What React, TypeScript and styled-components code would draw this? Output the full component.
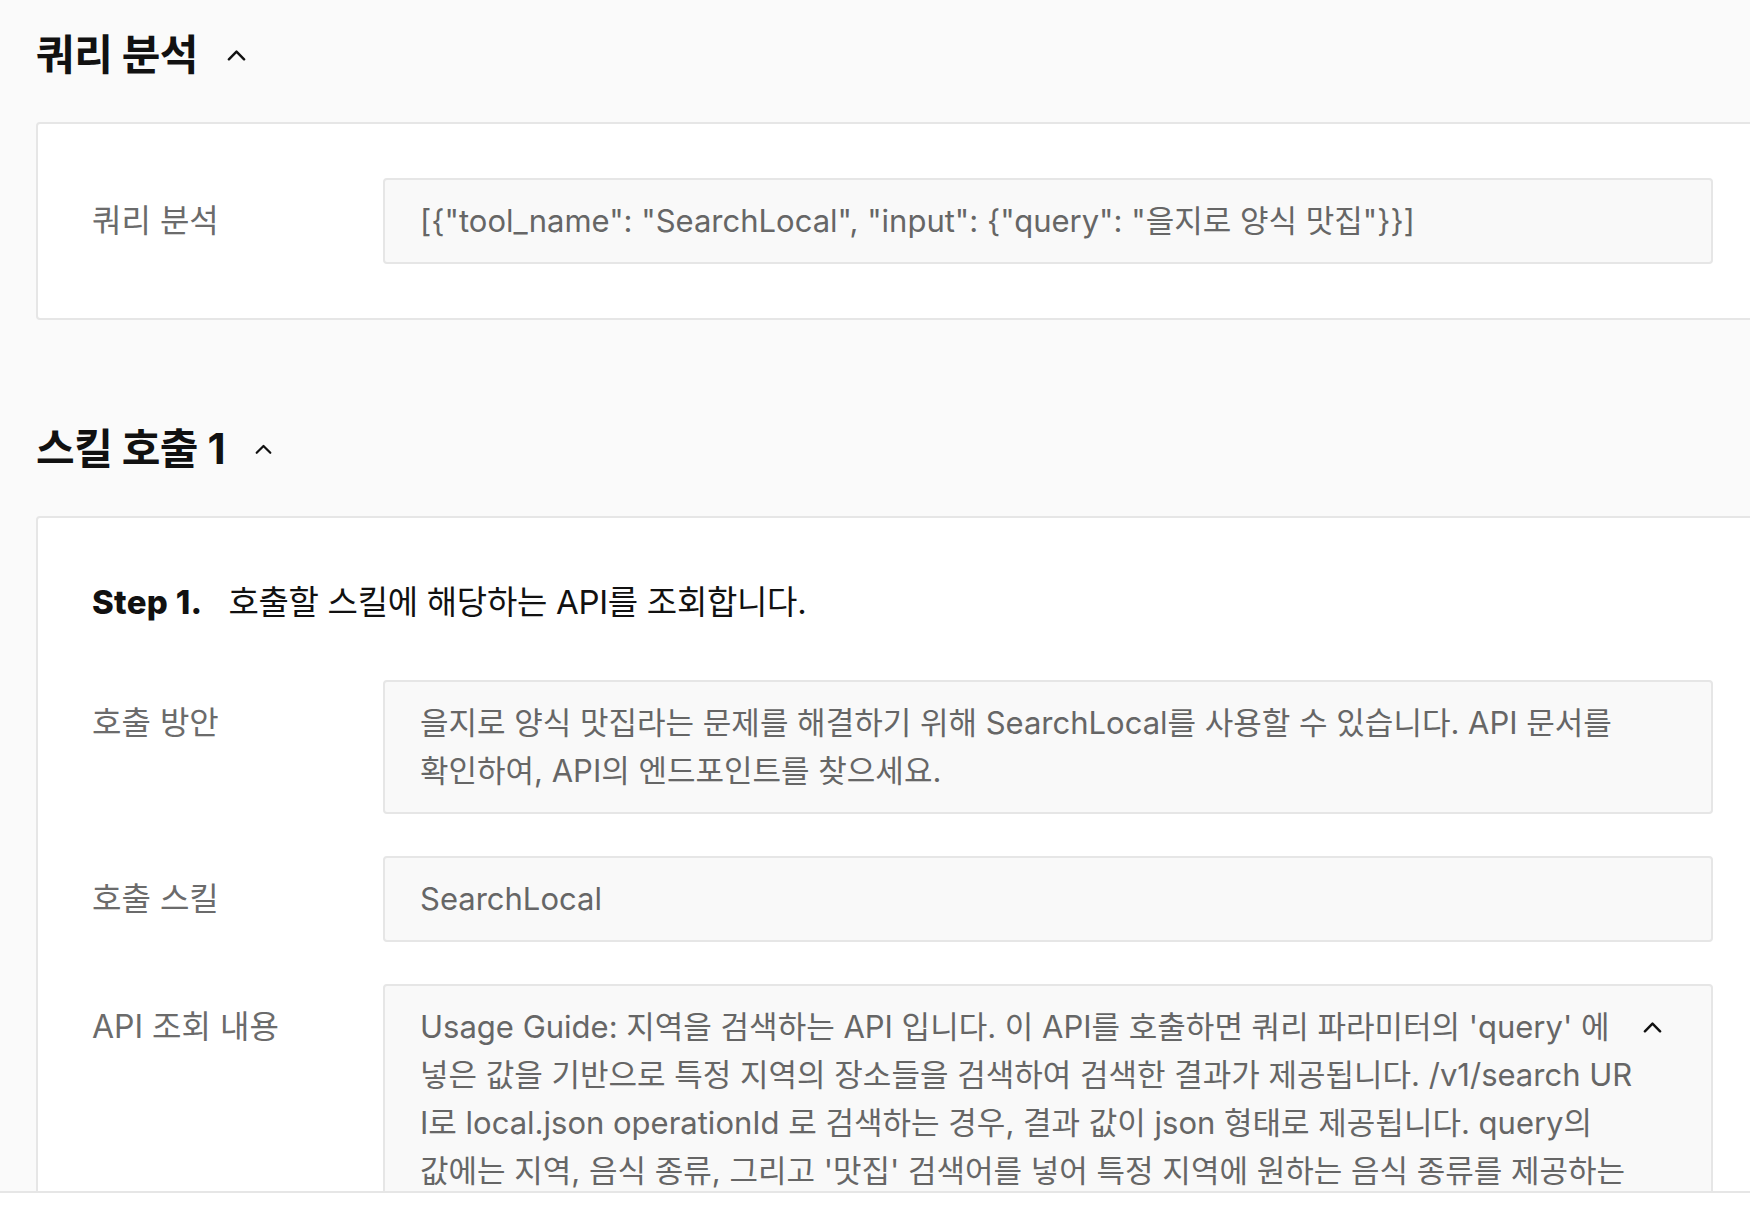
import React from "react";
import styled, { createGlobalStyle } from "styled-components";

const GlobalStyle = createGlobalStyle`
    html, body {
        margin: 0;
        padding: 0;
        background: #fafafa;
        overflow: hidden;
    }
    body {
        font-family: Inter, "Noto Sans CJK KR", sans-serif;
        color: #111;
    }
    * {
        box-sizing: border-box;
    }
`;

const Page = styled.div`
    display: flex;
    flex-direction: column;
    height: 100vh;
`;

const Main = styled.main`
    flex: 1;
    overflow: hidden;
    padding: 29px 0 0 36px;
`;

const Footer = styled.footer`
    height: 23px;
    flex-shrink: 0;
    background: #fff;
    border-top: 2px solid #e6e6e6;
`;

const Section = styled.section`
    & + & {
        margin-top: 103px;
    }
`;

const SectionHeader = styled.div`
    display: flex;
    align-items: center;
    gap: 28px;
    margin-bottom: 41px;
`;

const SectionTitle = styled.h2`
    margin: 0;
    font-size: 42px;
    line-height: 52px;
    font-weight: 700;
    color: #111;
    letter-spacing: -0.5px;
`;

const Card = styled.div`
    width: 1733px;
    background: #fff;
    border: 2px solid #e6e6e6;
    border-radius: 4px;
    padding: 54px;
`;

const Step = styled.div`
    margin: 6px 0 54px;
    font-size: 33px;
    line-height: 48px;
    color: #111;
    letter-spacing: -0.3px;
`;

const StepLabel = styled.b`
    font-weight: 800;
    letter-spacing: 0.3px;
    margin-right: 26px;
`;

const FieldRow = styled.div`
    display: grid;
    grid-template-columns: 291px minmax(0, 1fr);
    align-items: start;

    & + & {
        margin-top: 42px;
    }
`;

const Label = styled.div`
    padding-top: 19px;
    font-size: 32px;
    line-height: 48px;
    color: #6b6b6b;
`;

const ValueBox = styled.div<{ $collapsible?: boolean }>`
    display: flex;
    align-items: flex-start;
    gap: 16px;
    min-width: 0;
    background: #f9f9f9;
    border: 2px solid #e6e6e6;
    border-radius: 4px;
    padding: ${(p) => (p.$collapsible ? "17px 47px 17px 35px" : "17px 35px")};
    font-size: 31px;
    line-height: 48px;
    color: #666;
`;

const ValueText = styled.div`
    flex: 1;
    min-width: 0;
    word-break: keep-all;
`;

const ValueLine = styled.span`
    display: block;
    white-space: nowrap;
`;

const ToggleButton = styled.button`
    display: flex;
    align-items: center;
    justify-content: center;
    flex-shrink: 0;
    width: 24px;
    height: 48px;
    padding: 0;
    border: none;
    background: none;
    color: #111;
    cursor: pointer;
`;

const HeaderToggle = styled(ToggleButton)`
    width: 20px;
    height: 20px;
`;

const CaretSvg = styled.svg`
    display: block;
    flex-shrink: 0;
`;

const Caret = ({ width = 19 }: { width?: number }) => (
    <CaretSvg width={width} height={12} viewBox="0 0 20 12" fill="none">
        <path
            d="M2 10.5 L10 2.5 L18 10.5"
            stroke="currentColor"
            strokeWidth={2.6}
            strokeLinecap="round"
            strokeLinejoin="round"
        />
    </CaretSvg>
);

// API 조회 결과 (뷰어에 표시되는 줄 단위 그대로)
const apiUsageLines = [
    "Usage Guide: 지역을 검색하는 API 입니다. 이 API를 호출하면 쿼리 파라미터의 'query' 에",
    "넣은 값을 기반으로 특정 지역의 장소들을 검색하여 검색한 결과가 제공됩니다. /v1/search UR",
    "I로 local.json operationId 로 검색하는 경우, 결과 값이 json 형태로 제공됩니다. query의",
    "값에는 지역, 음식 종류, 그리고 '맛집' 검색어를 넣어 특정 지역에 원하는 음식 종류를 제공하는",
    "장소들을 검색할 수 있습니다. 검색 결과는 장소명, 주소, 카테고리 정보를 포함합니다.",
];

const App = () => {
    return (
        <Page>
            <GlobalStyle />
            <Main>
                <Section>
                    <SectionHeader>
                        <SectionTitle>쿼리 분석</SectionTitle>
                        <HeaderToggle aria-label="접기">
                            <Caret />
                        </HeaderToggle>
                    </SectionHeader>
                    <Card>
                        <FieldRow>
                            <Label>쿼리 분석</Label>
                            <ValueBox>
                                <ValueText>
                                    {'[{"tool_name": "SearchLocal", "input": {"query": "을지로 양식 맛집"}}]'}
                                </ValueText>
                            </ValueBox>
                        </FieldRow>
                    </Card>
                </Section>

                <Section>
                    <SectionHeader>
                        <SectionTitle>스킬 호출 1</SectionTitle>
                        <HeaderToggle aria-label="접기">
                            <Caret width={17} />
                        </HeaderToggle>
                    </SectionHeader>
                    <Card>
                        <Step>
                            <StepLabel>Step 1.</StepLabel>
                            호출할 스킬에 해당하는 API를 조회합니다.
                        </Step>
                        <FieldRow>
                            <Label>호출 방안</Label>
                            <ValueBox>
                                <ValueText>
                                    을지로 양식 맛집라는 문제를 해결하기 위해 SearchLocal를 사용할 수 있습니다. API 문서를
                                    확인하여, API의 엔드포인트를 찾으세요.
                                </ValueText>
                            </ValueBox>
                        </FieldRow>
                        <FieldRow>
                            <Label>호출 스킬</Label>
                            <ValueBox>
                                <ValueText>SearchLocal</ValueText>
                            </ValueBox>
                        </FieldRow>
                        <FieldRow>
                            <Label>API 조회 내용</Label>
                            <ValueBox $collapsible>
                                <ValueText>
                                    {apiUsageLines.map((line) => (
                                        <ValueLine key={line}>{line}</ValueLine>
                                    ))}
                                </ValueText>
                                <ToggleButton aria-label="접기">
                                    <Caret />
                                </ToggleButton>
                            </ValueBox>
                        </FieldRow>
                    </Card>
                </Section>
            </Main>
            <Footer />
        </Page>
    );
};

export default App;
